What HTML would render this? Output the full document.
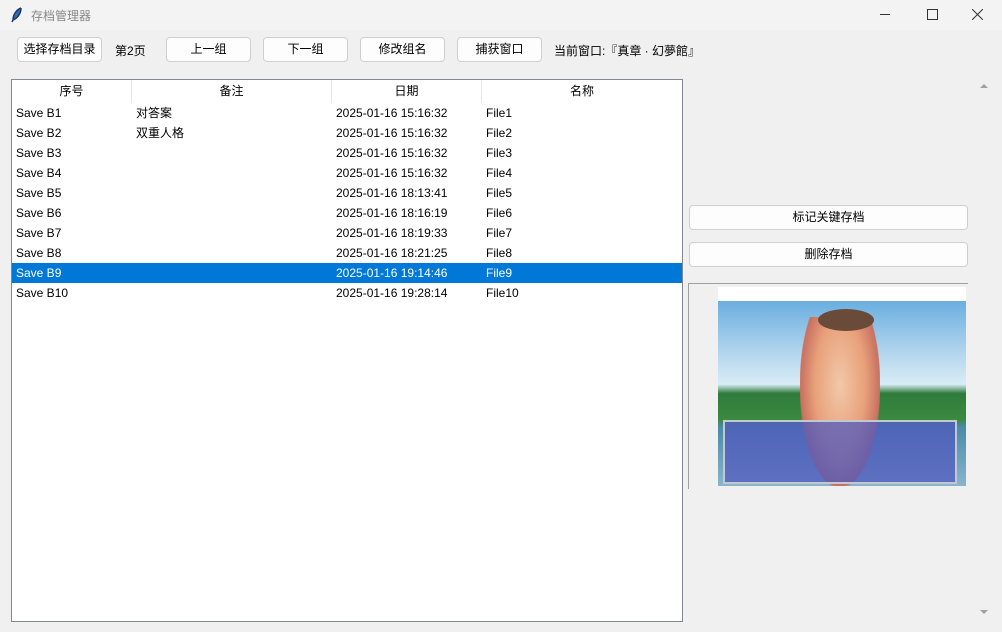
<!DOCTYPE html>
<html><head><meta charset="utf-8"><style>
body{margin:0;width:1002px;height:632px;background:#f0f0f0;font-family:"Liberation Sans","Noto Sans CJK SC",sans-serif;font-size:12px;color:#000;position:relative;overflow:hidden}
.a{position:absolute}
.btn{position:absolute;top:37px;height:23px;border:1px solid #cfcfcf;border-radius:4px;background:#fdfdfd;text-align:center;line-height:23px;font-size:12px}
.tbl{left:11px;top:79px;width:670px;height:541px;border:1px solid #828790;background:#fff}
.hd{position:absolute;top:0;height:23px;line-height:23px;text-align:center;border-right:1px solid #e5e5e5;background:#fff}
.row{position:absolute;left:0;width:670px;height:20px;line-height:20px}
.row span{position:absolute}
.sel{background:#0078d7;color:#fff}
.rb{position:absolute;left:689px;width:277px;height:23px;border:1px solid #cfcfcf;border-radius:4px;background:#fdfdfd;text-align:center;line-height:23px}
</style></head><body>
<div class="a" style="left:0;top:0;width:1002px;height:30px;background:#f3f3f3"></div>
<svg class="a" style="left:10px;top:7px" width="14" height="16"><path d="M11 1 C6 3 3 8 3 13 L2 15 M3 13 C8 11 11 6 11 1" stroke="#1a3a6a" stroke-width="1.5" fill="#3a6ab0"/></svg>
<div class="a" style="left:31px;top:7px;color:#888;font-size:12px">存档管理器</div>
<div class="a" style="left:880px;top:14px;width:10px;height:1px;background:#333"></div>
<div class="a" style="left:927px;top:9px;width:9px;height:9px;border:1px solid #333"></div>
<svg class="a" style="left:972px;top:9px" width="11" height="11"><path d="M0 0L11 11M11 0L0 11" stroke="#333"/></svg>

<div class="btn" style="left:17px;width:83px">选择存档目录</div>
<div class="a" style="left:115px;top:42px">第2页</div>
<div class="btn" style="left:166px;width:83px">上一组</div>
<div class="btn" style="left:263px;width:83px">下一组</div>
<div class="btn" style="left:360px;width:83px">修改组名</div>
<div class="btn" style="left:457px;width:83px">捕获窗口</div>
<div class="a" style="left:554px;top:42px">当前窗口:『真章 · 幻夢館』</div>

<div class="a tbl">
<div class="hd" style="left:0;width:119px">序号</div>
<div class="hd" style="left:120px;width:199px">备注</div>
<div class="hd" style="left:320px;width:149px">日期</div>
<div class="hd" style="left:470px;width:200px;border:none">名称</div>
<div class="row" style="top:23px"><span style="left:4px">Save B1</span><span style="left:124px">对答案</span><span style="left:324px">2025-01-16 15:16:32</span><span style="left:474px">File1</span></div>
<div class="row" style="top:43px"><span style="left:4px">Save B2</span><span style="left:124px">双重人格</span><span style="left:324px">2025-01-16 15:16:32</span><span style="left:474px">File2</span></div>
<div class="row" style="top:63px"><span style="left:4px">Save B3</span><span style="left:324px">2025-01-16 15:16:32</span><span style="left:474px">File3</span></div>
<div class="row" style="top:83px"><span style="left:4px">Save B4</span><span style="left:324px">2025-01-16 15:16:32</span><span style="left:474px">File4</span></div>
<div class="row" style="top:103px"><span style="left:4px">Save B5</span><span style="left:324px">2025-01-16 18:13:41</span><span style="left:474px">File5</span></div>
<div class="row" style="top:123px"><span style="left:4px">Save B6</span><span style="left:324px">2025-01-16 18:16:19</span><span style="left:474px">File6</span></div>
<div class="row" style="top:143px"><span style="left:4px">Save B7</span><span style="left:324px">2025-01-16 18:19:33</span><span style="left:474px">File7</span></div>
<div class="row" style="top:163px"><span style="left:4px">Save B8</span><span style="left:324px">2025-01-16 18:21:25</span><span style="left:474px">File8</span></div>
<div class="row sel" style="top:183px"><span style="left:4px">Save B9</span><span style="left:324px">2025-01-16 19:14:46</span><span style="left:474px">File9</span></div>
<div class="row" style="top:203px"><span style="left:4px">Save B10</span><span style="left:324px">2025-01-16 19:28:14</span><span style="left:474px">File10</span></div>
</div>

<div class="rb" style="top:205px">标记关键存档</div>
<div class="rb" style="top:242px">删除存档</div>

<div class="a" style="left:688px;top:283px;width:280px;height:1px;background:#a0a0a0"></div>
<div class="a" style="left:688px;top:283px;width:1px;height:206px;background:#a0a0a0"></div>
<div class="a" style="left:718px;top:287px;width:248px;height:199px;background:#fff;overflow:hidden">
  <div class="a" style="left:0;top:14px;width:248px;height:185px;background:linear-gradient(#6aaee0 0%,#b8d8ee 30%,#d8ecf6 45%,#2f7a3a 50%,#3b8a40 64%,#4a8aa8 68%,#8ab4cc 100%)"></div>
  <div class="a" style="left:82px;top:30px;width:80px;height:170px;background:radial-gradient(ellipse at 50% 40%,#f2c8a8 0%,#e8a07a 45%,#c87060 70%,transparent 72%)"></div>
  <div class="a" style="left:100px;top:22px;width:56px;height:22px;border-radius:50%;background:#6a4a38"></div>
  <div class="a" style="left:5px;top:133px;width:230px;height:60px;background:rgba(80,90,190,.75);border:2px solid #c0c8d0"></div>
</div>

<div class="a" style="left:976px;top:79px;width:20px;height:542px;background:#f0f0f0"></div>
<svg class="a" style="left:979px;top:82px" width="10" height="8"><path d="M1 6L5 2L9 6Z" fill="#a0a0a0"/></svg>
<svg class="a" style="left:979px;top:608px" width="10" height="8"><path d="M1 2L5 6L9 2Z" fill="#a0a0a0"/></svg>
</body></html>
